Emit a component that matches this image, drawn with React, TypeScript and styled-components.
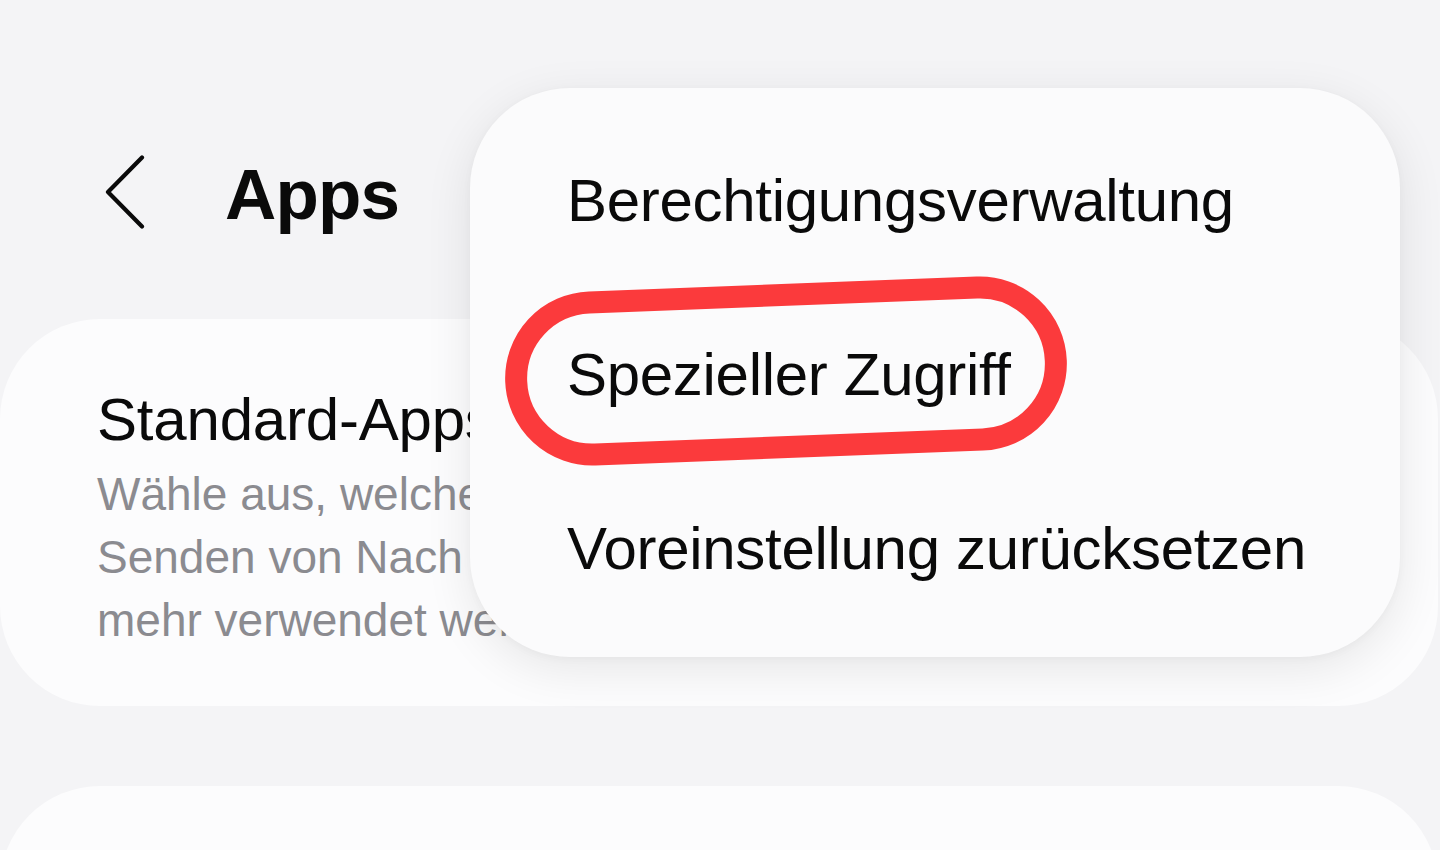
import styled, { createGlobalStyle } from "styled-components";

const GlobalStyle = createGlobalStyle`
  html, body {
    margin: 0;
    padding: 0;
    background: #f4f4f6;
  }
  body {
    font-family: "Liberation Sans", Arial, sans-serif;
    -webkit-font-smoothing: antialiased;
  }
`;

const Page = styled.div`
  position: relative;
  width: 1440px;
  height: 850px;
  overflow: hidden;
  background: #f4f4f6;
  display: flex;
  flex-direction: column;
`;

const Header = styled.header`
  display: flex;
  align-items: flex-start;
  gap: 80px;
  padding: 155px 0 0 105px;
`;

const BackButton = styled.button`
  display: flex;
  padding: 0;
  border: none;
  background: none;
  width: 40px;
  height: 74px;
`;

const Title = styled.h1`
  margin: 1px 0 0;
  font-size: 71px;
  line-height: 78px;
  font-weight: 700;
  letter-spacing: -0.8px;
  color: #0a0a0a;
`;

const Card = styled.section<{ $height: number; $top: number }>`
  box-sizing: border-box;
  width: 1438px;
  height: ${({ $height }) => $height}px;
  margin-top: ${({ $top }) => $top}px;
  flex-shrink: 0;
  border-radius: 100px;
  background: #fcfcfd;
  padding: 67px 0 0 97px;
`;

const CardTitle = styled.div`
  font-size: 60px;
  line-height: 67px;
  letter-spacing: -0.2px;
  color: #0a0a0a;
  white-space: nowrap;
`;

const CardText = styled.div`
  margin-top: 10px;
  font-size: 46px;
  line-height: 63px;
  color: #8b8b90;
  white-space: nowrap;
`;

const Menu = styled.ul`
  position: absolute;
  left: 470px;
  top: 88px;
  box-sizing: border-box;
  width: 930px;
  height: 569px;
  margin: 0;
  padding: 26px 0 0 97px;
  list-style: none;
  border-radius: 100px;
  background: #fbfbfc;
  box-shadow: 0 12px 48px rgba(0, 0, 0, 0.09), 0 2px 8px rgba(0, 0, 0, 0.03);
`;

const MenuItem = styled.li`
  font-size: 60px;
  line-height: 174px;
  letter-spacing: -0.3px;
  color: #0a0a0a;
  white-space: nowrap;
`;

const Marker = styled.svg`
  position: absolute;
  left: 490px;
  top: 260px;
  pointer-events: none;
`;

const MENU_ITEMS = [
  "Berechtigungsverwaltung",
  "Spezieller Zugriff",
  "Voreinstellung zurücksetzen",
];

export default function App() {
  return (
    <>
      <GlobalStyle />
      <Page>
        <Header>
          <BackButton aria-label="Zurück">
            <svg width="40" height="74" viewBox="0 0 40 74" fill="none">
              <path
                d="M37 2.5 L3 37 L37 71.5"
                stroke="#0a0a0a"
                strokeWidth="4.2"
                strokeLinecap="round"
                strokeLinejoin="round"
              />
            </svg>
          </BackButton>
          <Title>Apps</Title>
        </Header>

        <Card $top={85} $height={387}>
          <CardTitle>Standard-Apps</CardTitle>
          <CardText>
            Wähle aus, welche Apps
            <br />
            Senden von Nach
            <br />
            mehr verwendet wer
          </CardText>
        </Card>

        <Card $top={80} $height={300} />

        <Menu>
          {MENU_ITEMS.map((item) => (
            <MenuItem key={item}>{item}</MenuItem>
          ))}
        </Menu>

        <Marker width="600" height="230" viewBox="0 0 600 230">
          <rect
            x="26"
            y="35"
            width="540"
            height="152"
            rx="76"
            fill="none"
            stroke="#fb3a3c"
            strokeWidth="22"
            transform="rotate(-2.2 296 111)"
          />
        </Marker>
      </Page>
    </>
  );
}
